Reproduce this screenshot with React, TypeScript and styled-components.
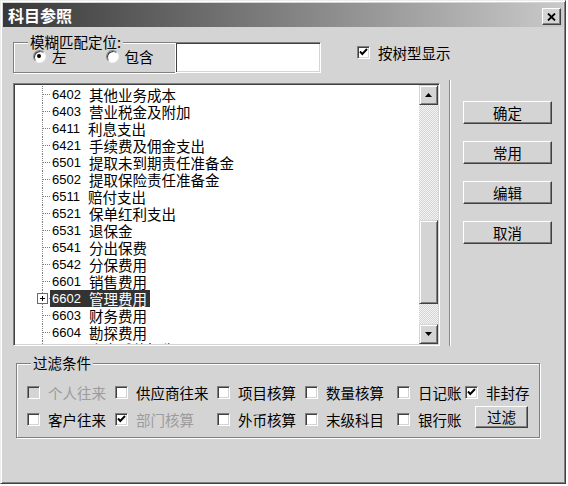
import React from 'react';
import styled, { createGlobalStyle } from 'styled-components';

const FACE = '#d4d4d4';

const GlobalStyle = createGlobalStyle`
  html, body {
    margin: 0;
    background: #fff;
  }
  body {
    font-family: "Noto Sans CJK SC", "Liberation Sans", sans-serif;
    font-size: 14.5px;
    line-height: 17px;
    color: #000;
  }
`;

const Window = styled.div`
  width: 566px;
  height: 484px;
  box-sizing: border-box;
  background: ${FACE};
  border: 1px solid;
  border-color: #ececec #404040 #404040 #ececec;
  box-shadow: inset 1px 1px #fff, inset -1px -1px #808080;
  padding: 2px;
  display: flex;
  flex-direction: column;
`;

const TitleBar = styled.div`
  height: 24px;
  flex-shrink: 0;
  display: flex;
  align-items: center;
  justify-content: space-between;
  padding-left: 5px;
  background: linear-gradient(to right, #383838, #c9c9c9);
`;

const TitleText = styled.span`
  color: #fff;
  font-weight: 700;
  font-size: 16px;
  line-height: 20px;
`;

const raised = `
  background: ${FACE};
  border: 1px solid;
  border-color: #fff #404040 #404040 #fff;
  box-shadow: inset -1px -1px #808080;
`;

const sunken = `
  border: 1px solid;
  border-color: #808080 #fff #fff #808080;
  box-shadow: inset 1px 1px #404040, inset -1px -1px ${FACE};
`;

const CloseButton = styled.button`
  ${raised}
  width: 19px;
  height: 17px;
  box-sizing: border-box;
  padding: 0;
  margin: 3px 2px 0 0;
  display: flex;
  align-items: center;
  justify-content: center;
`;

const Content = styled.div`
  padding-left: 10px;
  display: flex;
  flex-direction: column;
`;

const TopRow = styled.div`
  display: flex;
  margin-top: 15px;
  height: 31px;
`;

const GroupBox = styled.div<{ $w: number; $h: number; $openRight?: boolean }>`
  position: relative;
  box-sizing: border-box;
  width: ${(p) => p.$w}px;
  height: ${(p) => p.$h}px;
  border: 1px solid #808080;
  border-right: ${(p) => (p.$openRight ? 'none' : '1px solid #808080')};
  box-shadow: inset 1px 1px #fff, 1px 1px #fff;
`;

const GroupLegend = styled.span`
  position: absolute;
  top: -9px;
  left: 14px;
  padding: 0 2px;
  line-height: 16px;
  background: ${FACE};
`;

const RadioRow = styled.div`
  display: flex;
  align-items: center;
  gap: 39px;
  height: 100%;
  padding: 0 0 2px 19px;
  box-sizing: border-box;
`;

const RadioLabel = styled.label`
  display: flex;
  align-items: center;
  gap: 6px;
`;

const RadioCircle = styled.span<{ $on?: boolean }>`
  position: relative;
  width: 13px;
  height: 13px;
  box-sizing: border-box;
  border-radius: 50%;
  background: #fff;
  border: 1px solid;
  border-color: #808080 #f4f4f4 #f4f4f4 #808080;
  box-shadow: inset 1px 1px #404040;
  &::after {
    content: '';
    display: ${(p) => (p.$on ? 'block' : 'none')};
    position: absolute;
    left: 3px;
    top: 3px;
    width: 4px;
    height: 4px;
    border-radius: 50%;
    background: #000;
  }
`;

const TextInput = styled.input`
  ${sunken}
  width: 146px;
  height: 31px;
  box-sizing: border-box;
  background: #fff;
  outline: none;
  padding: 0 4px;
`;

const CheckItem = styled.label<{ $dim?: boolean }>`
  display: flex;
  align-items: center;
  gap: 8px;
  white-space: nowrap;
  color: ${(p) => (p.$dim ? '#9c9c9c' : '#000')};
`;

const TreeToggle = styled(CheckItem)`
  align-self: flex-start;
  margin: 2px 0 0 36px;
  height: 16px;
`;

const Box = styled.span<{ $disabled?: boolean }>`
  ${sunken}
  width: 13px;
  height: 13px;
  box-sizing: border-box;
  flex-shrink: 0;
  background: ${(p) => (p.$disabled ? FACE : '#fff')};
  display: flex;
  align-items: center;
  justify-content: center;
`;

const MiddleRow = styled.div`
  display: flex;
  margin-top: 10px;
  height: 263px;
`;

const TreePanel = styled.div`
  ${sunken}
  width: 427px;
  height: 263px;
  box-sizing: border-box;
  padding: 1px;
  display: flex;
  background: #fff;
`;

const TreeList = styled.div`
  flex: 1;
  overflow: hidden;
  padding-top: 1px;
  background: #fff;
`;

const TreeRow = styled.div`
  position: relative;
  height: 17px;
  display: flex;
  align-items: center;
  padding-left: 35px;
  white-space: nowrap;
  &::before {
    content: '';
    position: absolute;
    left: 27px;
    top: 0;
    bottom: 0;
    border-left: 1px dotted #808080;
  }
  &::after {
    content: '';
    position: absolute;
    left: 28px;
    top: 8px;
    width: 7px;
    border-top: 1px dotted #808080;
  }
`;

const Expander = styled.span`
  position: absolute;
  left: 22px;
  top: 3px;
  width: 11px;
  height: 11px;
  box-sizing: border-box;
  border: 1px solid #6a6a6a;
  background: #fff;
  z-index: 1;
  display: flex;
  align-items: center;
  justify-content: center;
`;

const NodeLabel = styled.span<{ $selected?: boolean }>`
  display: flex;
  align-items: center;
  height: 17px;
  line-height: 17px;
  padding: 0 3px 0 2px;
  background: ${(p) => (p.$selected ? '#333' : 'transparent')};
  color: ${(p) => (p.$selected ? '#fff' : '#000')};
`;

const Code = styled.span`
  font-family: "Liberation Sans", sans-serif;
  font-size: 13px;
`;

const Name = styled.span`
  margin-left: 8px;
  font-size: 14.5px;
`;

const ScrollBar = styled.div`
  width: 19px;
  display: flex;
  flex-direction: column;
  background: repeating-conic-gradient(${FACE} 0 25%, #f4f4f4 0 50%) 0 0 / 2px 2px;
`;

const ScrollButton = styled.div`
  height: 20px;
  box-sizing: border-box;
  background: ${FACE};
  border: 1px solid;
  border-color: ${FACE} #404040 #404040 ${FACE};
  box-shadow: inset 1px 1px #fff, inset -1px -1px #808080;
  display: flex;
  align-items: center;
  justify-content: center;
`;

const Track = styled.div`
  flex: 1;
`;

const Thumb = styled(ScrollButton)``;

const Divider = styled.div`
  width: 2px;
  height: 266px;
  margin: -3px 0 0 9px;
  box-sizing: border-box;
  border-left: 1px solid #8a8a8a;
  border-right: 1px solid #fff;
`;

const ButtonColumn = styled.div`
  margin-left: 12px;
  padding-top: 18px;
  display: flex;
  flex-direction: column;
  gap: 17px;
`;

const PushButton = styled.button<{ $w?: number; $h?: number }>`
  ${raised}
  width: ${(p) => p.$w ?? 89}px;
  height: ${(p) => p.$h ?? 23}px;
  box-sizing: border-box;
  padding: 0;
  font-family: "Noto Sans CJK SC", sans-serif;
  font-size: 14.5px;
  line-height: 16px;
  color: #000;
`;

const FilterGroup = styled(GroupBox)`
  margin: 17px 0 0 3px;
  padding: 17px 0 0 10px;
`;

const FilterGrid = styled.div`
  display: grid;
  grid-template-columns: 88px 102px 88px 92px 68px auto;
  grid-auto-rows: 22px;
  row-gap: 5px;
  align-items: center;
`;

const FilterButton = styled(PushButton)`
  align-self: start;
  margin: -2px 0 0 10px;
`;

const CheckMark = () => (
  <svg width="9" height="8" viewBox="0 0 9 8">
    <path d="M1 3.5 L3.3 6 L8 1" fill="none" stroke="#000" strokeWidth="1.9" />
  </svg>
);

function Checkbox({
  label,
  checked,
  disabled,
  dim,
}: {
  label: string;
  checked?: boolean;
  disabled?: boolean;
  dim?: boolean;
}) {
  return (
    <CheckItem $dim={dim || disabled}>
      <Box $disabled={disabled}>{checked && <CheckMark />}</Box>
      {label}
    </CheckItem>
  );
}

const accounts = [
  ['6402', '其他业务成本'],
  ['6403', '营业税金及附加'],
  ['6411', '利息支出'],
  ['6421', '手续费及佣金支出'],
  ['6501', '提取未到期责任准备金'],
  ['6502', '提取保险责任准备金'],
  ['6511', '赔付支出'],
  ['6521', '保单红利支出'],
  ['6531', '退保金'],
  ['6541', '分出保费'],
  ['6542', '分保费用'],
  ['6601', '销售费用'],
  ['6602', '管理费用'],
  ['6603', '财务费用'],
  ['6604', '勘探费用'],
  ['6701', '资产减值损失'],
];

const SELECTED = '6602';

export default function App() {
  return (
    <>
      <GlobalStyle />
      <Window>
        <TitleBar>
          <TitleText>科目参照</TitleText>
          <CloseButton>
            <svg width="9" height="8" viewBox="0 0 9 8">
              <path d="M1 0.5 L8 7.5 M8 0.5 L1 7.5" stroke="#000" strokeWidth="1.8" />
            </svg>
          </CloseButton>
        </TitleBar>

        <Content>
          <TopRow>
            <GroupBox $w={162} $h={31} $openRight>
              <GroupLegend>模糊匹配定位:</GroupLegend>
              <RadioRow>
                <RadioLabel>
                  <RadioCircle $on />左
                </RadioLabel>
                <RadioLabel>
                  <RadioCircle />包含
                </RadioLabel>
              </RadioRow>
            </GroupBox>
            <TextInput />
            <TreeToggle>
              <Box>
                <CheckMark />
              </Box>
              按树型显示
            </TreeToggle>
          </TopRow>

          <MiddleRow>
            <TreePanel>
              <TreeList>
                {accounts.map(([code, name]) => (
                  <TreeRow key={code}>
                    {code === SELECTED && (
                      <Expander>
                        <svg width="7" height="7" viewBox="0 0 7 7">
                          <path d="M1 3.5 H6 M3.5 1 V6" stroke="#000" strokeWidth="1" />
                        </svg>
                      </Expander>
                    )}
                    <NodeLabel $selected={code === SELECTED}>
                      <Code>{code}</Code>
                      <Name>{name}</Name>
                    </NodeLabel>
                  </TreeRow>
                ))}
              </TreeList>
              <ScrollBar>
                <ScrollButton>
                  <svg width="7" height="4" viewBox="0 0 7 4">
                    <path d="M3.5 0 L7 4 H0 Z" fill="#000" />
                  </svg>
                </ScrollButton>
                <Track>
                  <Thumb style={{ marginTop: 115, height: 84 }} />
                </Track>
                <ScrollButton>
                  <svg width="7" height="4" viewBox="0 0 7 4">
                    <path d="M0 0 H7 L3.5 4 Z" fill="#000" />
                  </svg>
                </ScrollButton>
              </ScrollBar>
            </TreePanel>
            <Divider />
            <ButtonColumn>
              <PushButton>确定</PushButton>
              <PushButton>常用</PushButton>
              <PushButton>编辑</PushButton>
              <PushButton>取消</PushButton>
            </ButtonColumn>
          </MiddleRow>

          <FilterGroup $w={524} $h={75}>
            <GroupLegend>过滤条件</GroupLegend>
            <FilterGrid>
              <Checkbox label="个人往来" disabled />
              <Checkbox label="供应商往来" />
              <Checkbox label="项目核算" />
              <Checkbox label="数量核算" />
              <Checkbox label="日记账" />
              <Checkbox label="非封存" checked />
              <Checkbox label="客户往来" />
              <Checkbox label="部门核算" checked dim />
              <Checkbox label="外币核算" />
              <Checkbox label="末级科目" />
              <Checkbox label="银行账" />
              <FilterButton $w={53} $h={22}>
                过滤
              </FilterButton>
            </FilterGrid>
          </FilterGroup>
        </Content>
      </Window>
    </>
  );
}
